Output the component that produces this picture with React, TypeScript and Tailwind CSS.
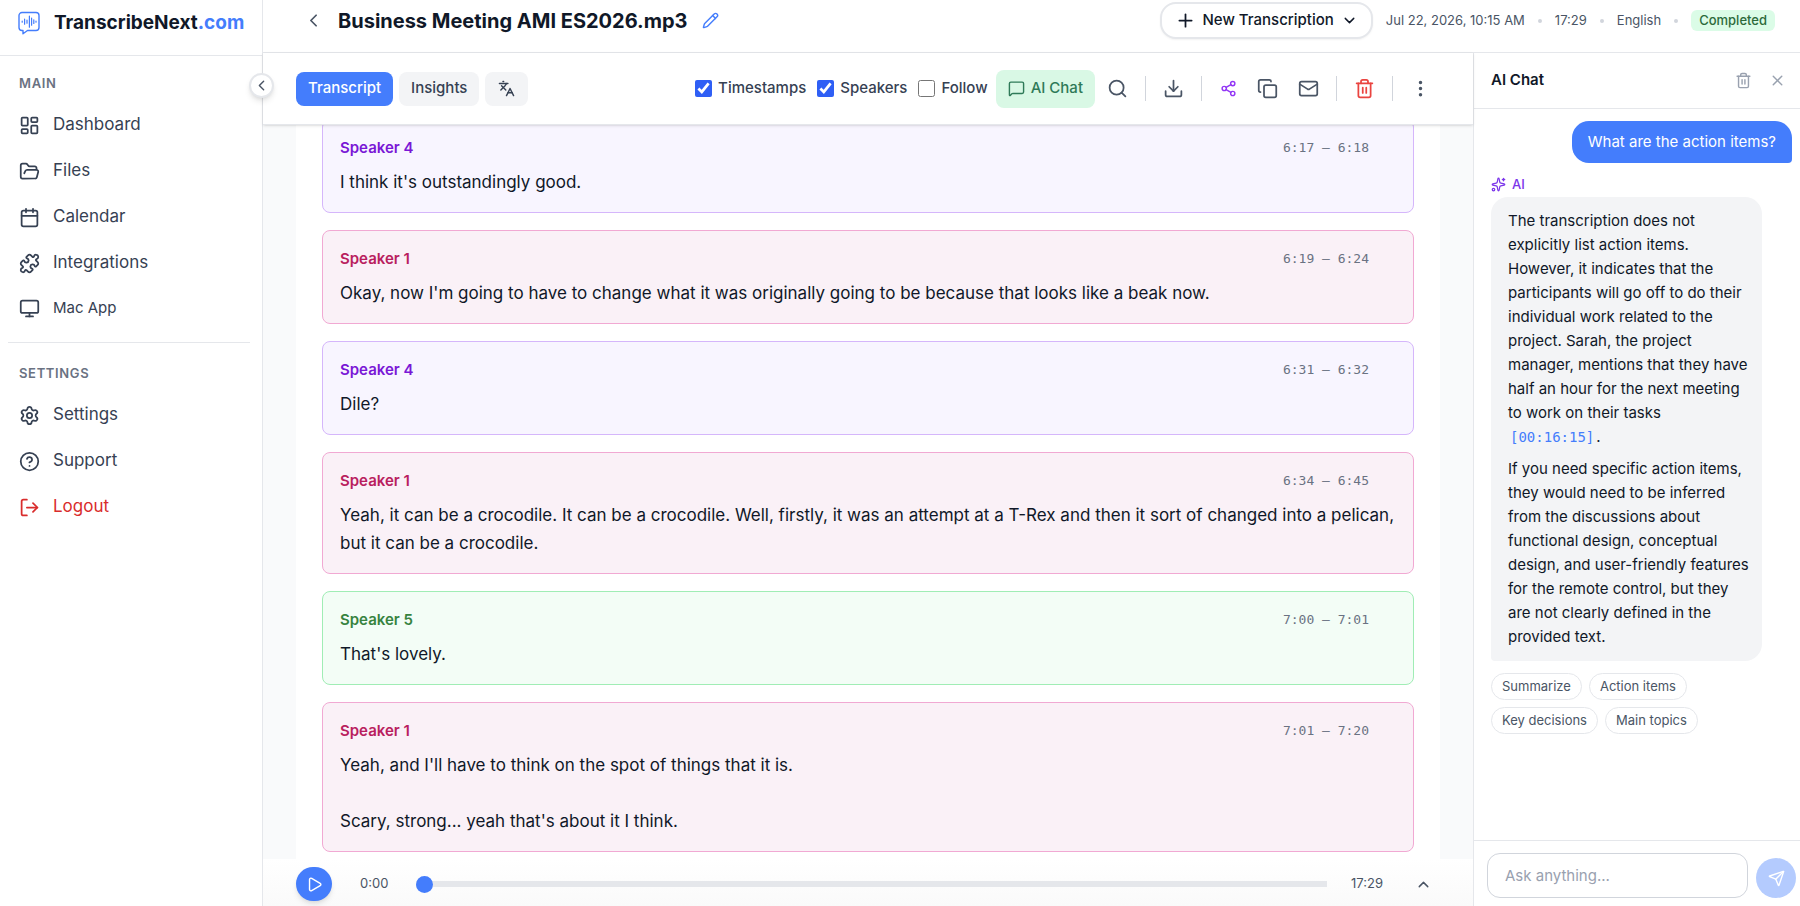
import { useState } from "react";
import {
  Calendar,
  ChevronDown,
  ChevronLeft,
  ChevronUp,
  CircleHelp,
  Copy,
  Download,
  EllipsisVertical,
  FolderOpen,
  Languages,
  LayoutDashboard,
  LogOut,
  Mail,
  MessageSquare,
  Monitor,
  Pencil,
  Play,
  Plus,
  Puzzle,
  Search,
  Send,
  Settings,
  Share2,
  Sparkles,
  Trash2,
  X,
} from "lucide-react";
import clsx from "clsx";

type Tone = "purple" | "pink" | "green";

const tones: Record<Tone, { card: string; name: string }> = {
  purple: { card: "bg-[#f8f5ff] border-[#d5b6fb]", name: "text-[#7a17d6]" },
  pink: { card: "bg-[#faf1f7] border-[#f1a9d3]", name: "text-[#b9205e]" },
  green: { card: "bg-[#f3fdf6] border-[#a0edb5]", name: "text-[#37833f]" },
};

const segments: { speaker: string; time: string; text: string; tone: Tone }[] = [
  { speaker: "Speaker 4", time: "6:17 – 6:18", text: "I think it's outstandingly good.", tone: "purple" },
  {
    speaker: "Speaker 1",
    time: "6:19 – 6:24",
    text: "Okay, now I'm going to have to change what it was originally going to be because that looks like a beak now.",
    tone: "pink",
  },
  { speaker: "Speaker 4", time: "6:31 – 6:32", text: "Dile?", tone: "purple" },
  {
    speaker: "Speaker 1",
    time: "6:34 – 6:45",
    text: "Yeah, it can be a crocodile. It can be a crocodile. Well, firstly, it was an attempt at a T-Rex and then it sort of changed into a pelican, but it can be a crocodile.",
    tone: "pink",
  },
  { speaker: "Speaker 5", time: "7:00 – 7:01", text: "That's lovely.", tone: "green" },
  {
    speaker: "Speaker 1",
    time: "7:01 – 7:20",
    text: "Yeah, and I'll have to think on the spot of things that it is.\n\nScary, strong... yeah that's about it I think.",
    tone: "pink",
  },
];

const mainLinks = [
  { label: "Dashboard", icon: LayoutDashboard },
  { label: "Files", icon: FolderOpen },
  { label: "Calendar", icon: Calendar },
  { label: "Integrations", icon: Puzzle },
];

const suggestions = ["Summarize", "Action items", "Key decisions", "Main topics"];

const Logo = () => (
  <svg width="22" height="24" viewBox="0 0 22 24" fill="none" stroke="#447dfc" strokeLinecap="round" strokeLinejoin="round">
    <path d="M4 1.5h14a3 3 0 0 1 3 3v12a3 3 0 0 1-3 3H9.5L5 22.8v-3.3H4a3 3 0 0 1-3-3v-12a3 3 0 0 1 3-3Z" strokeWidth="1.4" />
    <path d="M4.2 10v1.2M6.6 8.2v5M9 9.2v3M11.4 5v11.2M13.6 7v7.2M15.8 8.8v3.6M18 10v1.2" strokeWidth="1.2" />
  </svg>
);

const Sidebar = () => {
  const itemClass = "flex h-[42px] items-center gap-[13px] rounded-lg px-[11px] text-[17px] text-gray-700";

  return (
    <aside className="relative flex w-[263px] shrink-0 flex-col border-r border-gray-200 bg-white">
      <div className="flex h-14 items-start gap-3.5 border-b border-gray-200 pt-[11px] pl-[18px]">
        <Logo />
        <span className="text-[19px] leading-6 font-bold text-gray-900">
          TranscribeNext<span className="text-[#447dfc]">.com</span>
        </span>
      </div>

      <nav className="px-2 pt-[18px]">
        <h3 className="mb-3 px-[11px] text-[13px] leading-[18px] font-semibold tracking-wider text-gray-500">MAIN</h3>
        <div className="flex flex-col gap-1">
          {mainLinks.map(({ label, icon: Icon }) => (
            <a key={label} href="#" className={itemClass}>
              <Icon size={21} />
              {label}
            </a>
          ))}
          <a href="#" className="flex h-10 items-center gap-[13px] rounded-lg px-[11px] text-[15px] text-gray-700">
            <Monitor size={21} />
            Mac App
          </a>
        </div>

        <hr className="mt-3.5 mr-1 border-gray-200" />

        <h3 className="mt-[21px] mb-3 px-[11px] text-[13px] leading-[18px] font-semibold tracking-wider text-gray-500">
          SETTINGS
        </h3>
        <div className="flex flex-col gap-1">
          <a href="#" className={itemClass}>
            <Settings size={21} />
            Settings
          </a>
          <a href="#" className={itemClass}>
            <CircleHelp size={21} />
            Support
          </a>
          <button className="flex h-[42px] items-center gap-[13px] rounded-lg px-[11px] text-[17px] text-[#d92c2c]">
            <LogOut size={21} />
            Logout
          </button>
        </div>
      </nav>

      <button
        aria-label="Collapse sidebar"
        className="absolute top-[73px] -right-3 z-20 flex size-[25px] items-center justify-center rounded-full border-2 border-gray-200 bg-white text-gray-600 shadow-md"
      >
        <ChevronLeft size={17} className="shrink-0" />
      </button>
    </aside>
  );
};

const Dot = () => <span className="size-1 rounded-full bg-gray-300" />;

const PageHeader = () => (
  <header className="flex items-start justify-between border-b border-gray-200 bg-white pt-0.5 pr-[25px] pb-[13px] pl-10">
    <div className="flex h-[37px] items-center gap-3.5">
      <button aria-label="Back" className="text-gray-600">
        <ChevronLeft size={21} />
      </button>
      <h1 className="text-xl font-bold text-gray-900">Business Meeting AMI ES2026.mp3</h1>
      <button aria-label="Rename" className="text-[#447dfc]">
        <Pencil size={17} />
      </button>
    </div>

    <div className="flex h-[37px] items-center gap-[13px]">
      <button className="flex h-[37px] items-center gap-[7px] rounded-2xl border-2 border-gray-200 bg-white px-[13px] text-[15px] font-medium text-gray-900 shadow-xs">
        <Plus size={21} />
        New Transcription
        <ChevronDown size={17} />
      </button>
      <div className="flex items-center gap-[13px] text-[13px] text-gray-600">
        <span>Jul 22, 2026, 10:15 AM</span>
        <Dot />
        <span>17:29</span>
        <Dot />
        <span>English</span>
        <Dot />
        <span className="rounded-md bg-green-100 px-2 leading-[21px] font-medium text-[#2c6a3a]">Completed</span>
      </div>
    </div>
  </header>
);

const CheckOption = ({ label, initial }: { label: string; initial: boolean }) => {
  const [checked, setChecked] = useState(initial);
  return (
    <label className="flex items-center gap-1.5 text-[15px] font-medium text-gray-700">
      <input
        type="checkbox"
        checked={checked}
        onChange={(e) => setChecked(e.target.checked)}
        className="size-[17px] accent-[#2f5ff5]"
      />
      {label}
    </label>
  );
};

const Divider = () => <span className="mx-[5px] h-[25px] w-px bg-gray-300" />;

const Toolbar = () => {
  const iconButton = "flex h-[38px] w-[37px] items-center justify-center rounded-lg text-gray-600";

  return (
    <div className="relative z-10 flex h-[72px] shrink-0 items-center justify-between border-b border-gray-200 bg-white pr-[34px] pl-[33px] shadow-sm">
      <div className="flex gap-1.5 text-[15px] font-medium">
        <button className="h-[34px] rounded-lg bg-[#447dfc] px-3 text-white">Transcript</button>
        <button className="h-[34px] rounded-lg bg-gray-100 px-3 text-gray-700">Insights</button>
        <button aria-label="Translate" className="h-[34px] rounded-lg bg-gray-100 px-[13px] text-gray-700">
          <Languages size={17} />
        </button>
      </div>

      <div className="flex items-center">
        <div className="mr-2 flex items-center gap-[11px]">
          <CheckOption label="Timestamps" initial />
          <CheckOption label="Speakers" initial />
          <CheckOption label="Follow" initial={false} />
        </div>
        <div className="flex items-center gap-1">
          <button className="flex h-[38px] items-center gap-1.5 rounded-lg bg-[#d9f8e5] px-3 text-[15px] font-medium text-[#2f7a58]">
            <MessageSquare size={17} />
            AI Chat
          </button>
          <button aria-label="Search" className={iconButton}>
            <Search size={21} />
          </button>
          <Divider />
          <button aria-label="Download" className={iconButton}>
            <Download size={21} />
          </button>
          <Divider />
          <button aria-label="Share" className="flex h-[38px] w-[34px] items-center justify-center text-[#9236f5]">
            <Share2 size={17} />
          </button>
          <button aria-label="Copy" className={iconButton}>
            <Copy size={21} />
          </button>
          <button aria-label="Email" className={iconButton}>
            <Mail size={21} />
          </button>
          <Divider />
          <button aria-label="Delete" className="flex h-[38px] w-[37px] items-center justify-center text-[#ea4440]">
            <Trash2 size={21} />
          </button>
          <Divider />
          <button aria-label="More" className={iconButton}>
            <EllipsisVertical size={21} />
          </button>
        </div>
      </div>
    </div>
  );
};

const Player = () => (
  <div className="flex items-start bg-gradient-to-b from-white to-[#fafafa] px-[33px] pt-2 pb-[5px]">
    <button
      aria-label="Play"
      className="flex h-[34px] w-9 shrink-0 items-center justify-center rounded-full bg-[#447dfc] text-white shadow-md"
    >
      <Play size={17} />
    </button>
    <div className="flex h-[34px] flex-1 items-center text-[13px] text-gray-600">
      <span className="ml-7">0:00</span>
      <input
        type="range"
        aria-label="Seek"
        min={0}
        max={1049}
        defaultValue={0}
        className="mr-6 ml-7 h-1.5 flex-1 appearance-none bg-gray-200 [&::-webkit-slider-thumb]:size-[17px] [&::-webkit-slider-thumb]:appearance-none [&::-webkit-slider-thumb]:rounded-full [&::-webkit-slider-thumb]:bg-[#447dfc]"
      />
      <span className="mr-8">17:29</span>
      <button aria-label="Expand player" className="mr-2">
        <ChevronUp size={17} />
      </button>
    </div>
  </div>
);

const ChatPanel = () => (
  <aside className="flex w-[327px] shrink-0 flex-col border-l border-gray-200 bg-white">
    <div className="flex h-14 items-center justify-between border-b border-gray-200 pr-3.5 pl-[17px]">
      <h2 className="text-[15px] font-semibold text-gray-900">AI Chat</h2>
      <div className="flex items-center gap-[17px] text-gray-400">
        <button aria-label="Clear chat">
          <Trash2 size={17} />
        </button>
        <button aria-label="Close chat">
          <X size={17} />
        </button>
      </div>
    </div>

    <div className="flex flex-1 flex-col items-start overflow-hidden pt-3 pr-2 pl-[17px]">
      <p className="self-end rounded-[17px] rounded-br-sm bg-[#447dfc] px-4 py-[9px] text-[15px] leading-6 text-white">
        What are the action items?
      </p>
      <div className="mt-3 mb-1 flex items-center gap-1.5 text-[13px] leading-[18px] font-medium text-[#7b35ea]">
        <Sparkles size={15} />
        AI
      </div>
      <div className="flex w-[271px] flex-col gap-2 rounded-[17px] rounded-bl-sm bg-gray-100 py-3 pr-3 pl-[17px] text-[15px] leading-6 text-gray-900">
        <p>
          The transcription does not explicitly list action items. However, it indicates that the participants will go
          off to do their individual work related to the project. Sarah, the project manager, mentions that they have
          half an hour for the next meeting to work on their tasks{" "}
          <a href="#" className="px-0.5 font-['DejaVu_Sans_Mono',monospace] text-[14px] text-[#447dfc]">
            [00:16:15]
          </a>
          .
        </p>
        <p>
          If you need specific action items, they would need to be inferred from the discussions about functional
          design, conceptual design, and user-friendly features for the remote control, but they are not clearly defined
          in the provided text.
        </p>
      </div>
      <div className="mt-3 flex w-[271px] flex-wrap gap-[7px]">
        {suggestions.map((s) => (
          <button key={s} className="rounded-full border border-gray-200 px-2.5 text-[13px] leading-[25px] text-gray-600">
            {s}
          </button>
        ))}
      </div>
    </div>

    <form
      className="flex items-end gap-2 border-t border-gray-200 pt-3 pr-1 pb-2 pl-[13px]"
      onSubmit={(e) => e.preventDefault()}
    >
      <input
        type="text"
        aria-label="Ask anything"
        placeholder="Ask anything..."
        className="h-[45px] min-w-0 flex-1 rounded-[13px] border border-gray-300 px-[17px] text-[15px] placeholder:text-gray-400"
      />
      <button
        aria-label="Send"
        className="flex size-10 shrink-0 items-center justify-center rounded-full bg-[#b4cbfe] text-white"
      >
        <Send size={17} />
      </button>
    </form>
  </aside>
);

export default function App() {
  return (
    <div className="flex h-screen overflow-hidden bg-white font-['Inter',sans-serif]">
      <Sidebar />
      <div className="flex min-w-0 flex-1 flex-col">
        <PageHeader />
        <div className="flex min-h-0 flex-1">
          <main className="flex min-w-0 flex-1 flex-col">
            <Toolbar />
            <div className="flex min-h-0 flex-1 flex-col overflow-hidden bg-gray-50 px-[33px]">
              {/* Pinned to the newest segment, older ones run off the top */}
              <div className="flex min-h-0 flex-1 flex-col justify-end gap-[17px] bg-white px-[26px] pb-[7px]">
                {segments.map((s) => (
                  <article
                    key={s.time}
                    className={clsx("shrink-0 rounded-lg border px-[17px] pt-[17px] pb-4", tones[s.tone].card)}
                  >
                    <div className="mb-[9px] flex items-center justify-between pr-[27px] leading-[22px]">
                      <span className={clsx("text-[15px] font-semibold", tones[s.tone].name)}>{s.speaker}</span>
                      <span className="font-['DejaVu_Sans_Mono',monospace] text-[13px] text-gray-500">{s.time}</span>
                    </div>
                    <p className="text-[17px] leading-7 whitespace-pre-line text-gray-900">{s.text}</p>
                  </article>
                ))}
              </div>
            </div>
            <Player />
          </main>
          <ChatPanel />
        </div>
      </div>
    </div>
  );
}
